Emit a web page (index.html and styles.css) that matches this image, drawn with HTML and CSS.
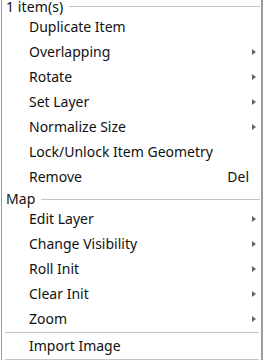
FILE: index.html
```html
<!DOCTYPE html>
<html>
<head>
<meta charset="utf-8">
<link rel="stylesheet" href="styles.css">
</head>
<body>
<div class="menu">
  <div class="section"><span class="section-title">1 item(s)</span><span class="section-line"></span></div>
  <div class="item"><span class="label">Duplicate Item</span></div>
  <div class="item"><span class="label">Overlapping</span><span class="arrow"></span></div>
  <div class="item"><span class="label">Rotate</span><span class="arrow"></span></div>
  <div class="item"><span class="label">Set Layer</span><span class="arrow"></span></div>
  <div class="item"><span class="label">Normalize Size</span><span class="arrow"></span></div>
  <div class="item"><span class="label">Lock/Unlock Item Geometry</span></div>
  <div class="item"><span class="label">Remove</span><span class="shortcut">Del</span></div>
  <div class="section section-map"><span class="section-title">Map</span><span class="section-line"></span></div>
  <div class="item"><span class="label">Edit Layer</span><span class="arrow"></span></div>
  <div class="item"><span class="label">Change Visibility</span><span class="arrow"></span></div>
  <div class="item"><span class="label">Roll Init</span><span class="arrow"></span></div>
  <div class="item"><span class="label">Clear Init</span><span class="arrow"></span></div>
  <div class="item"><span class="label">Zoom</span><span class="arrow"></span></div>
  <div class="separator"></div>
  <div class="item"><span class="label">Import Image</span></div>
  <div class="separator"></div>
</div>
</body>
</html>
```
FILE: styles.css
```css
html, body {
  margin: 0;
  padding: 0;
  background: #ffffff;
  overflow: hidden;
}
body {
  font-family: "Noto Sans", "Open Sans", sans-serif;
  font-size: 14px;
  color: #111111;
}
.menu {
  margin: -2px 0 0 1px;
  width: 262px;
  border-left: 1px solid #9a9a9a;
  border-right: 2px solid #9a9a9a;
  height: 400px;
  box-sizing: border-box;
}
.section {
  height: 16px;
  display: flex;
  align-items: center;
  padding: 0 1px 0 4px;
}
.section-map {
  height: 17px;
  padding-top: 2px;
  box-sizing: border-box;
}
.section-title {
  white-space: nowrap;
  letter-spacing: 0.1px;
}
.section-line {
  flex: 1;
  height: 1px;
  background: #c4c4c4;
  margin-left: 6px;
  margin-top: 1px;
}
.item {
  height: 25px;
  display: flex;
  align-items: center;
  padding: 0 5px 0 27px;
}
.label {
  flex: 1;
  white-space: nowrap;
}
.shortcut {
  margin-right: 7px;
}
.arrow {
  width: 0;
  height: 0;
  border-top: 3px solid transparent;
  border-bottom: 3px solid transparent;
  border-left: 4px solid #666666;
}
.separator {
  height: 1px;
  background: #c4c4c4;
  margin: 1px 2px 0 3px;
}
```
